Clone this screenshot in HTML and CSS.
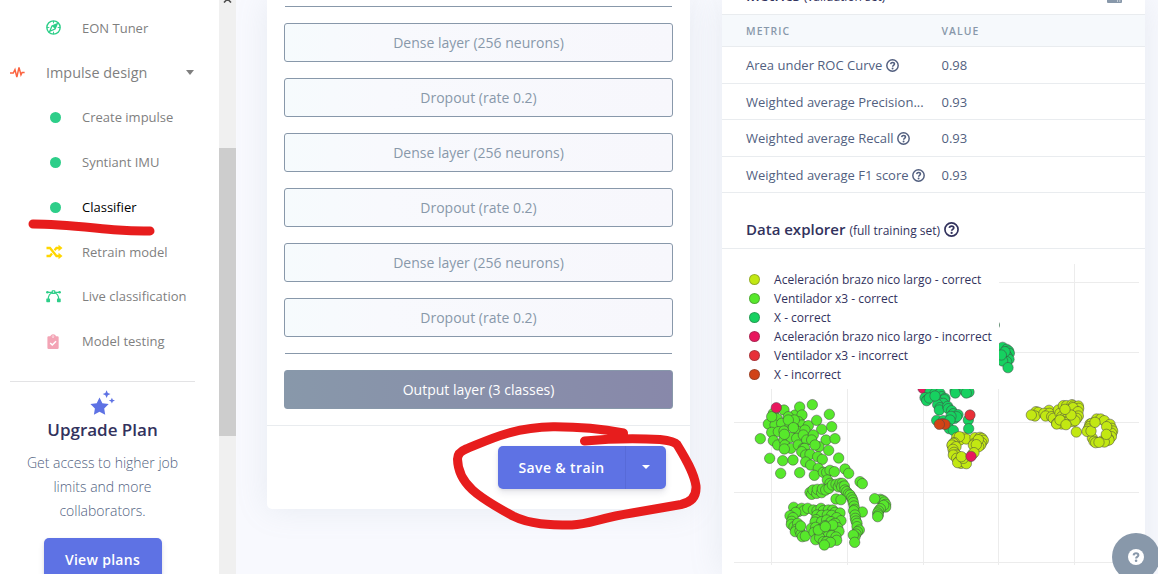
FILE: index.html
```
<!DOCTYPE html>
<html lang="en">
<head>
<meta charset="utf-8">
<title>Classifier</title>
<link rel="stylesheet" href="styles.css">
</head>
<body>
<svg class="defs" width="0" height="0">
  <symbol id="help" viewBox="0 0 16 16">
    <circle cx="8" cy="8" r="7" fill="none" stroke="currentColor" stroke-width="1.8"/>
    <path d="M5.7 6.300c.2-1.300 1.200-2 2.400-2 1.300 0 2.300.8 2.300 1.900 0 1.700-2.200 1.600-2.200 3.200" fill="none" stroke="currentColor" stroke-width="1.900"/>
    <circle cx="8.100" cy="11.700" r="1.200" fill="currentColor"/>
  </symbol>
</svg>
<div class="app">
  <nav class="sidebar">
    <ul class="menu">
      <li class="item"><svg class="icon" viewBox="0 0 16 16"><circle cx="8" cy="8" r="7.100" fill="none" stroke="#2dce89" stroke-width="1.500"/><path d="M8 1v2.500M8 12.500V15M1 8h2.500M12.500 8H15" stroke="#2dce89" stroke-width="1"/><path d="M12 4L9.600 9.600 4 12l2.400-5.600z" fill="#fff" stroke="#2dce89" stroke-width="1.400"/><path d="M12 4L6.400 6.400l3.200 3.200z" fill="#2dce89"/></svg><span>EON Tuner</span></li>
      <li class="item group"><svg class="icon" viewBox="0 0 16 16"><path d="M0 8.500h3.500L5.300 5l2 8 2.300-10.500 2.100 8 1.200-2.500h2.700" fill="none" stroke="#fb6340" stroke-width="1.600"/></svg><span>Impulse design</span><i class="caret"></i></li>
      <li class="item"><i class="dot"></i><span>Create impulse</span></li>
      <li class="item"><i class="dot"></i><span>Syntiant IMU</span></li>
      <li class="item active"><i class="dot"></i><span>Classifier</span></li>
      <li class="item"><svg class="icon shuffle" viewBox="0 0 16 16"><path d="M0 4h3.500l6.500 8h3M0 12h3.500l2-2.400M8 6.300L10 4h3" fill="none" stroke="#ffd600" stroke-width="2.300"/><path d="M12 .8L16 4l-4 3.200zM12 8.800l4 3.200-4 3.200z" fill="#ffd600"/></svg><span>Retrain model</span></li>
      <li class="item"><svg class="icon" viewBox="0 0 16 16"><path d="M1 3.500h14M2.300 12c0-5 2-8 5.700-8s5.700 3 5.700 8" fill="none" stroke="#2dce89" stroke-width="1.300"/><g fill="#2dce89"><circle cx="1.500" cy="3.500" r="1.400"/><circle cx="14.500" cy="3.500" r="1.400"/><rect x="6" y="1.200" width="4" height="4" rx="1"/><rect x=".3" y="10" width="4" height="4" rx=".7"/><rect x="11.700" y="10" width="4" height="4" rx=".7"/></g><circle cx="8" cy="3.200" r=".8" fill="#fff"/></svg><span>Live classification</span></li>
      <li class="item"><svg class="icon" viewBox="0 0 16 16"><rect x="1.500" y="2.500" width="12" height="13.500" rx="1.300" fill="#f3a4b5"/><path d="M5 3.500a2.500 2.500 0 0 1 5 0" fill="none" stroke="#f3a4b5" stroke-width="1.400"/><circle cx="7.500" cy="3.400" r=".7" fill="#fff"/><path d="M4.500 9.500l2.200 2.200 4-4" fill="none" stroke="#fff" stroke-width="1.600"/></svg><span>Model testing</span></li>
    </ul>
    <section class="upgrade">
      <svg class="stars" viewBox="0 0 26 26"><path d="M9.500 7.500l2.900 5.700 6.300.9-4.500 4.400 1 6.200-5.700-2.900-5.600 2.900 1-6.200-4.500-4.400 6.300-.9z" fill="#5e72e4"/><path d="M16.600.2l1.200 2.700 2.700 1.200-2.700 1.200-1.200 2.700-1.200-2.700-2.700-1.200 2.700-1.200zM21.900 7.700l.9 2 2.200.9-2.200.9-.9 2-.9-2-2.200-.9 2.200-.9z" fill="#5e72e4"/></svg>
      <h3>Upgrade Plan</h3>
      <p>Get access to higher job limits and more collaborators.</p>
      <button class="btn">View plans</button>
    </section>
  </nav>
  <div class="scrollbar"><svg class="up" viewBox="0 0 9 4"><path d="M1 3.500L4.500 0 8 3.500" fill="none" stroke="#505050" stroke-width="1.600"/></svg><div class="thumb"></div></div>
  <main class="content">
    <section class="card network">
      <div class="layers">
        <hr>
        <div class="layer">Dense layer (256 neurons)</div>
        <div class="layer">Dropout (rate 0.2)</div>
        <div class="layer">Dense layer (256 neurons)</div>
        <div class="layer">Dropout (rate 0.2)</div>
        <div class="layer">Dense layer (256 neurons)</div>
        <div class="layer">Dropout (rate 0.2)</div>
        <hr>
        <div class="layer output">Output layer (3 classes)</div>
      </div>
      <footer class="actions"><div class="split"><button class="train">Save &amp; train</button><button class="more"><i class="caret"></i></button></div></footer>
    </section>
    <section class="card results">
      <header class="title first"><b>Metrics</b><small>(validation set)</small><svg class="panel" viewBox="0 0 15 8"><rect width="15" height="8" rx="1" fill="#8898aa"/><path d="M10 6h1M12.300 6h1" stroke="#fff" stroke-width="1"/></svg></header>
      <div class="row head"><span>METRIC</span><span>VALUE</span></div>
      <div class="row"><span>Area under ROC Curve <svg class="help"><use href="#help"/></svg></span><span>0.98</span></div>
      <div class="row low"><span>Weighted average Precision...</span><span>0.93</span></div>
      <div class="row"><span>Weighted average Recall <svg class="help"><use href="#help"/></svg></span><span>0.93</span></div>
      <div class="row low"><span>Weighted average F1 score <svg class="help"><use href="#help"/></svg></span><span>0.93</span></div>
      <header class="title explorer"><b>Data explorer</b><small>(full training set)</small><svg class="help"><use href="#help"/></svg></header>
      <div class="plot">
        <svg class="chart" viewBox="722 249 423 325">
          <path class="grid" d="M771.500 264v301M847.500 264v301M923.500 264v301M998.500 264v301M1074.500 264v301M734 282.500h405M734 352.500h405M734 422.500h405M734 492.500h405M734 562.500h405"/>
          <g id="points"></g>
        </svg>
        <ul class="legend">
          <li><i class="c1"></i>Aceleración brazo nico largo - correct</li>
          <li><i class="c2"></i>Ventilador x3 - correct</li>
          <li><i class="c3"></i>X - correct</li>
          <li><i class="c4"></i>Aceleración brazo nico largo - incorrect</li>
          <li><i class="c5"></i>Ventilador x3 - incorrect</li>
          <li><i class="c6"></i>X - incorrect</li>
        </ul>
      </div>
    </section>
  </main>
</div>
<div class="support"><svg viewBox="0 0 16 16"><circle cx="8" cy="8" r="8" fill="#fff"/><path d="M5.600 6.300c.2-1.300 1.200-2 2.400-2 1.400 0 2.400.8 2.400 1.900 0 1.700-2.300 1.600-2.300 3.200" fill="none" stroke="#8898aa" stroke-width="2"/><circle cx="8.100" cy="11.800" r="1.300" fill="#8898aa"/></svg></div>
<svg class="marker" viewBox="0 0 1158 574">
  <path d="M33 224C60 224 88 227.500 118 230Q134 231.300 150 231"/>
  <path d="M623.500 433Q590 426.500 553 426.700C512 427 484 442 466 449Q457.500 452.500 457.500 459C458 484 478 497 513 516C530 524.500 550 525 572 525C590 524 600 518 632 513L681 504.500Q697 501 696 486C694 472 684 456 677 444.500Q674 441 660 439.500Q622 437.500 584.500 441"/>
</svg>
<script src="points.js"></script>
</body>
</html>
```
FILE: styles.css
```
* { box-sizing: border-box; }
body { margin: 0; width: 1158px; height: 574px; overflow: hidden; position: relative; background: #f8f9fe; font-family: "Open Sans", sans-serif; font-size: 13px; color: #525f7f; }
ul { list-style: none; margin: 0; padding: 0; }
button { font: inherit; border: 0; margin: 0; padding: 0; }
.defs { display: block; position: absolute; }
.app { display: flex; height: 574px; }

.sidebar { width: 219px; flex: none; background: #fff; overflow: hidden; }
.menu { padding-top: 5.500px; }
.item { display: flex; align-items: center; height: 44.780px; padding-left: 46px; color: #7f7f7f; }
.item span { flex: none; }
.item .icon { width: 15px; height: 15px; margin-right: 21px; flex: none; }
.item .shuffle { width: 17px; height: 16px; margin-right: 19px; }
.item.group { padding-left: 10px; font-size: 14.400px; }
.group .caret { margin-left: 39px; border-top-color: #7f7f7f; }
.item.active { color: #000; }
.dot { width: 11px; height: 11px; border-radius: 50%; background: #2dce89; margin: 1px 21px 0 4px; flex: none; }
.caret { border: solid transparent; border-width: 5px 4.500px 0; border-top-color: #fff; width: 0; height: 0; }
.upgrade { width: 185px; margin: 17px 0 0 10px; border-top: 1px solid #e3e3e5; padding-top: 8px; text-align: center; }
.stars { display: block; width: 26px; height: 26px; margin: 0 auto; }
.upgrade h3 { margin: 2px 0 9px; font-size: 17px; line-height: 24px; font-weight: 600; color: #32325d; }
.upgrade p { margin: 0 auto 15px; width: 170px; font-size: 14px; line-height: 24px; font-weight: 300; }
.btn { display: block; margin: 0 auto; width: 118px; height: 43px; border-radius: 5px; background: #5e72e4; color: #fff; font-size: 14px; font-weight: 600; letter-spacing: .3px; box-shadow: 0 4px 6px rgba(50,50,93,.11), 0 1px 3px rgba(0,0,0,.08); }

.scrollbar { width: 17px; flex: none; background: #f0f0f0; display: flex; flex-direction: column; align-items: center; }
.up { width: 9px; height: 4px; margin-top: -1px; }
.thumb { width: 17px; height: 288px; margin-top: 145px; background: #cdcdcd; }

.content { flex: 1; display: flex; align-items: flex-start; gap: 32px; padding-left: 31px; overflow: hidden; }
.card { width: 423px; background: #fff; flex: none; box-shadow: 0 0 32px rgba(136,152,170,.15); }
.network { height: 509px; border-radius: 0 0 5px 5px; }
.layers { display: flex; flex-direction: column; gap: 16px; height: 426px; padding: 6px 17px 0; border-bottom: 1px solid #e9ecef; }
.layers hr { width: 387px; height: 1px; margin: 0 auto; border: 0; background: #8898aa; flex: none; }
.layer { height: 39px; flex: none; border: 1px solid #8898aa; border-radius: 3px; display: flex; align-items: center; justify-content: center; font-size: 14px; color: #8898aa; background: linear-gradient(87deg, #f6fbfd, #f8f9fd 25%, #f7f7fc); }
.layer.output { background: linear-gradient(87deg, #8898aa, #8888aa); color: #fff; }
.actions { display: flex; justify-content: flex-end; padding: 20px 24px; }
.split { display: flex; width: 168px; height: 43px; border-radius: 5px; background: #5e72e4; box-shadow: 0 4px 6px rgba(50,50,93,.11), 0 1px 3px rgba(0,0,0,.08); }
.split button { background: none; color: #fff; }
.split .train { width: 127px; font-size: 14px; font-weight: 600; letter-spacing: .38px; }
.split .more { flex: 1; display: flex; align-items: center; justify-content: center; border-left: 1px solid #576ad8; }
.more .caret { border-width: 4px 4px 0; margin-top: -2px; }

.results { height: 574px; }
.title { display: flex; align-items: baseline; border-bottom: 1px solid #e9ecef; color: #32325d; padding: 0 24px; line-height: 22px; }
.title b { font-size: 15px; font-weight: 600; margin-right: 4px; }
.title small { font-size: 12px; }
.first { height: 34px; margin-top: -19px; padding-top: 3px; }
.panel { width: 15px; height: 8px; margin-left: auto; margin-right: -1px; align-self: flex-start; margin-top: 11px; }
.explorer { height: 56px; padding-top: 25px; }
.explorer .help { width: 15px; height: 15px; margin-left: 4px; align-self: flex-start; margin-top: 4px; color: #32325d; }
.row { display: flex; align-items: center; height: 36.500px; padding-left: 24px; border-bottom: 1px solid #e9ecef; }
.row.low { padding-top: 1px; }
.row span:first-child { width: 195.500px; white-space: nowrap; }
.row.head { height: 32px; background: #f6f9fc; color: #8898aa; font-size: 10.400px; font-weight: 600; letter-spacing: 1.100px; }
.help { width: 13px; height: 13px; vertical-align: -2px; }
.plot { position: relative; height: 325px; }
.chart { display: block; width: 423px; height: 325px; }
.grid { stroke: #ececec; fill: none; }
.legend { position: absolute; left: 10px; top: 13px; width: 267px; height: 127px; padding: 8px 0 0 16.500px; background: #fff; color: #32325d; font-size: 12px; line-height: 19px; white-space: nowrap; }
.legend li { display: flex; align-items: center; }
.legend i { width: 11px; height: 11px; border-radius: 50%; border: 1px solid rgba(68,68,68,.35); margin-right: 14.600px; flex: none; }
.c1, .legend .c1 { fill: #c2e812; background: #c2e812; }
.c2, .legend .c2 { fill: #57e82b; background: #57e82b; }
.c3, .legend .c3 { fill: #16d160; background: #16d160; }
.c4, .legend .c4 { fill: #e8175d; background: #e8175d; }
.c5, .legend .c5 { fill: #e83038; background: #e83038; }
.c6, .legend .c6 { fill: #d14316; background: #d14316; }
#points circle { stroke: #444; stroke-opacity: .5; stroke-width: 1; }

.support { position: absolute; left: 1112px; top: 533px; width: 48px; height: 48px; border-radius: 50%; background: #8898aa; display: flex; align-items: center; justify-content: center; }
.support svg { width: 16px; height: 16px; }
.marker { position: absolute; left: 0; top: 0; width: 1158px; height: 574px; fill: none; stroke: #e71d1d; stroke-width: 9; stroke-linecap: round; stroke-linejoin: round; pointer-events: none; }
```
FILE: points.js
```
// Clusters: class, origin x, origin y, then x/y offsets in thirds of a pixel.
const clusters = [
  ["c2", 735, 385, "115,85 147,75 180,90 194,66 232,59 283,88 201,90 160,95 100,117 127,101 120,120 140,115 165,120 190,110 200,120 220,122 245,106 260,133 290,125 110,142 130,140 147,138 175,125 190,140 210,135 76,161 115,167 128,180 147,165 150,180 168,157 168,190 185,160 190,180 205,150 215,165 235,150 230,165 273,165 300,161 252,185 281,196 104,220 143,227 174,225 148,192 205,190 209,190 200,200 212,210 225,208 248,215 262,223 212,231 227,240 311,219 250,250 137,265 194,263 238,271 265,262 275,262 285,256 298,260 330,252 341,265 375,290 382,296 277,285 285,295 178,105 160,105 175,128 110,95 148,148 240,180"],
  ["c2", 735, 385, "225,322 230,328 234,315 245,325 247,313 260,323 262,312 272,315 282,310 292,300 303,298 310,305 315,295 322,295 320,306 328,303 330,315 335,320 340,327 345,330 350,338 353,345 355,353 357,363 359,373 382,381 356,377 360,390 361,400 363,408 366,415 366,425 373,435 367,440 363,447 360,455 355,450 359,472 303,342 318,344"],
  ["c2", 735, 385, "436,343 443,346 448,351 452,358 452,366 446,361 436,371 431,378 428,384 430,390 428,395 419,341"],
  ["c2", 735, 385, "176,367 190,380 200,370 207,377 218,370 235,375 246,377 258,370 265,377 280,375 293,375 300,382 315,384 182,382 165,392 174,398 170,409 169,418 177,425 188,415 184,433 181,440 195,438 198,447 202,455 211,453 197,423 246,390 260,391 277,390 290,391 305,398 318,407 243,404 240,411 260,410 275,405 288,410 300,415 308,428 229,430 242,427 258,432 270,422 283,433 295,437 312,439 237,442 253,446 265,446 280,452 290,452 303,456 305,466 242,464 254,458 265,470 275,470 286,472 268,480 250,435 293,420 271,425"],
  ["c4", 735, 385, "124,68"],
  ["c3", 900, 310, "283,45 308,112 320,118 326,123 328,130 318,134 322,140 327,148 320,155 308,153 324,173 315,125 304,135"],
  ["c4", 900, 310, "69,235"],
  ["c3", 900, 310, "90,245 105,250 120,250 165,242 166,249 195,243 207,246 199,249 75,263 82,269 80,272 88,264 125,260 135,265 133,269 117,278 130,280 113,284 120,293 118,300 143,289 145,296 155,302 160,311 174,314 164,325 170,320 153,319 110,331 130,332 150,330 205,330 148,356 160,361 206,356 105,258"],
  ["c6", 900, 310, "127,341 135,343 118,343"],
  ["c1", 900, 310, "170,383 190,382 180,390 199,387 178,380 163,398 157,407 160,400 156,405 168,410 159,418 162,427 170,435 160,435 225,383 240,382 246,385 250,391 245,398 242,405 236,410 223,400 220,405 235,389 229,404 217,433 222,428 170,445 175,455 183,460 195,458 173,458 198,453 199,461 190,445 184,440"],
  ["c5", 900, 310, "210,315"],
  ["c4", 900, 310, "213,439"],
  ["c1", 1010, 380, "78,95 85,97 75,108 64,105 117,91 102,100 118,100 107,108 125,110 130,115 140,130 145,90 150,100 160,77 170,77 186,74 190,78 205,78 206,85 189,83 204,95 205,108 200,115 155,110 165,112 172,115 160,125 155,132 170,130 178,122 190,125 195,122 183,105 140,132 150,120 165,88 168,134 199,156 260,117 272,117 283,122 240,132 245,130 238,140 235,147 300,133 305,145 308,153 305,160 304,170 295,175 290,182 297,180 247,174 252,184 257,188 277,183 283,186 267,187 231,154 243,153 290,140 289,163 255,127"]
];
const layer = document.getElementById("points");
for (const [kind, ox, oy, data] of clusters) {
  for (const pair of data.split(" ")) {
    const [x, y] = pair.split(",").map(Number);
    const dot = document.createElementNS("http://www.w3.org/2000/svg", "circle");
    dot.setAttribute("class", kind);
    dot.setAttribute("cx", ox + x / 3);
    dot.setAttribute("cy", oy + y / 3);
    dot.setAttribute("r", 5.2);
    layer.append(dot);
  }
}
```
